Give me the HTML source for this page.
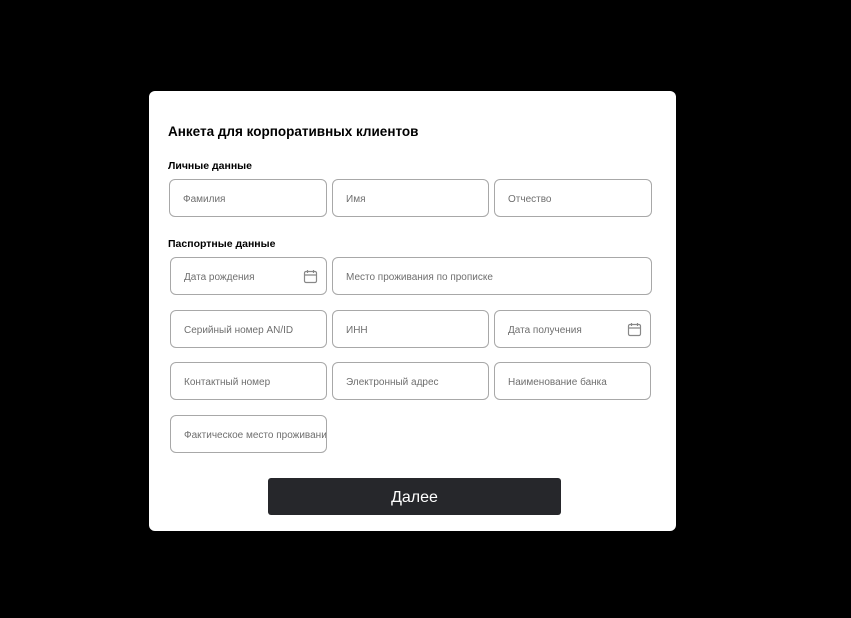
<!DOCTYPE html>
<html><head><meta charset="utf-8"><style>
body{margin:0;width:851px;height:618px;background:#000;font-family:"Liberation Sans",sans-serif;position:relative;overflow:hidden}
.card{position:absolute;left:149px;top:91px;width:527px;height:440px;background:#fff;border-radius:6px}
.t{position:absolute;white-space:nowrap;color:#000}
.f{position:absolute;box-sizing:border-box;border:1px solid #a8a8a8;border-radius:6px;height:38px;font-size:10px;color:#6f6f6f;line-height:12px;padding-top:14px;padding-left:13px;white-space:nowrap;overflow:hidden}
.cal{position:absolute;right:8px;top:11px}
.btn{position:absolute;left:268px;top:478px;width:293px;height:37px;background:#26272b;border-radius:3px;color:#fff;font-size:16px;text-align:center;line-height:39px}
</style></head><body>
<div class="card"></div>
<div class="t" style="left:168px;top:124px;font-size:13.5px;font-weight:bold">Анкета для корпоративных клиентов</div>
<div class="t" style="left:168px;top:160px;font-size:10.5px;font-weight:bold">Личные данные</div>
<div class="f" style="left:169px;top:179px;width:158px">Фамилия</div>
<div class="f" style="left:332px;top:179px;width:157px">Имя</div>
<div class="f" style="left:494px;top:179px;width:158px">Отчество</div>
<div class="t" style="left:168px;top:238px;font-size:10.5px;font-weight:bold">Паспортные данные</div>
<div class="f" style="left:170px;top:257px;width:157px">Дата рождения<svg class="cal" width="15" height="15" viewBox="0 0 15 15" fill="none" stroke="#888" stroke-width="1.2"><rect x="1.5" y="2.5" width="12" height="11" rx="1.5"/><path d="M1.5 6h12M4.5 1v3M10.5 1v3"/></svg></div>
<div class="f" style="left:332px;top:257px;width:320px">Место проживания по прописке</div>
<div class="f" style="left:170px;top:310px;width:157px">Серийный номер AN/ID</div>
<div class="f" style="left:332px;top:310px;width:157px">ИНН</div>
<div class="f" style="left:494px;top:310px;width:157px">Дата получения<svg class="cal" width="15" height="15" viewBox="0 0 15 15" fill="none" stroke="#888" stroke-width="1.2"><rect x="1.5" y="2.5" width="12" height="11" rx="1.5"/><path d="M1.5 6h12M4.5 1v3M10.5 1v3"/></svg></div>
<div class="f" style="left:170px;top:362px;width:157px">Контактный номер</div>
<div class="f" style="left:332px;top:362px;width:157px">Электронный адрес</div>
<div class="f" style="left:494px;top:362px;width:157px">Наименование банка</div>
<div class="f" style="left:170px;top:415px;width:157px"><span style="display:inline-block;width:142px;overflow:hidden;vertical-align:top">Фактическое место проживания</span></div>
<div class="btn">Далее</div>
</body></html>
